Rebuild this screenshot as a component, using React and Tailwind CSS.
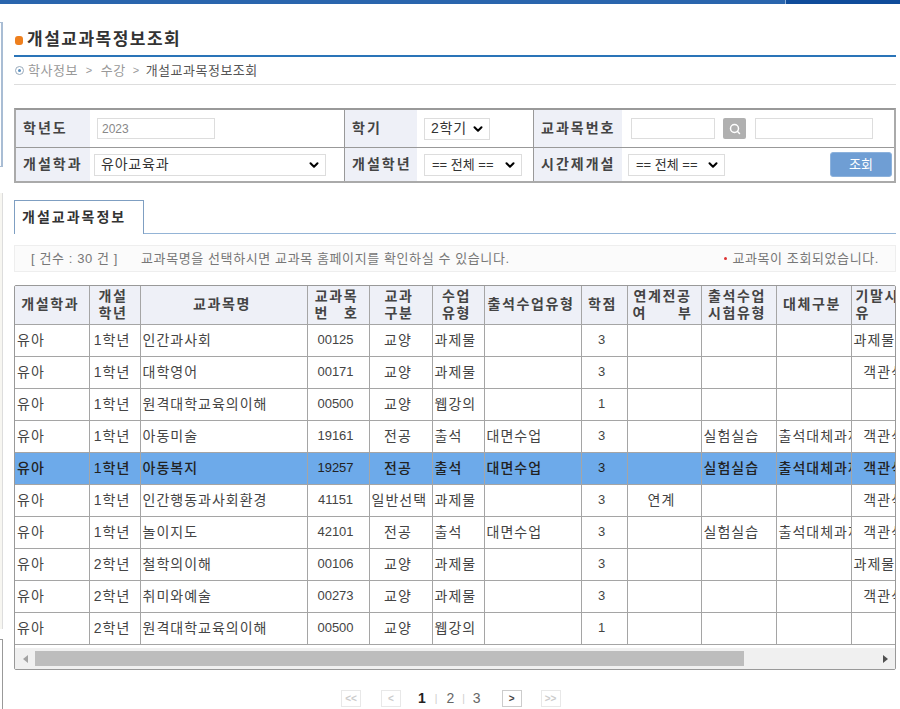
import React from "react";
import { ChevronDown, Search } from "lucide-react";

const cols = [74, 51, 167, 62, 63, 52, 97, 46, 74, 75, 75, 60];

const rows = [
  ["유아", "1학년", "인간과사회", "00125", "교양", "과제물", "", "3", "", "", "", "과제물"],
  ["유아", "1학년", "대학영어", "00171", "교양", "과제물", "", "3", "", "", "", "  객관식"],
  ["유아", "1학년", "원격대학교육의이해", "00500", "교양", "웹강의", "", "1", "", "", "", ""],
  ["유아", "1학년", "아동미술", "19161", "전공", "출석", "대면수업", "3", "", "실험실습", "출석대체과제", "  객관식"],
  ["유아", "1학년", "아동복지", "19257", "전공", "출석", "대면수업", "3", "", "실험실습", "출석대체과제", "  객관식"],
  ["유아", "1학년", "인간행동과사회환경", "41151", "일반선택", "과제물", "", "3", "연계", "", "", "  객관식"],
  ["유아", "1학년", "놀이지도", "42101", "전공", "출석", "대면수업", "3", "", "실험실습", "출석대체과제", "  객관식"],
  ["유아", "2학년", "철학의이해", "00106", "교양", "과제물", "", "3", "", "", "", "과제물"],
  ["유아", "2학년", "취미와예술", "00273", "교양", "과제물", "", "3", "", "", "", "  객관식"],
  ["유아", "2학년", "원격대학교육의이해", "00500", "교양", "웹강의", "", "1", "", "", "", ""],
];

const headers = [
  ["개설학과"],
  ["개설", "학년"],
  ["교과목명"],
  ["교과목", "번 호"],
  ["교과", "구분"],
  ["수업", "유형"],
  ["출석수업유형"],
  ["학점"],
  ["연계전공", "여 부"],
  ["출석수업", "시험유형"],
  ["대체구분"],
  ["기말시험", "유"],
];

const centered = [1, 3, 4, 7, 8];
const digits = [3, 7];

function Label({ children, w }) {
  return (
    <div className={`${w} shrink-0 bg-[#eef0f7] flex items-center pl-[7px] font-bold text-[14px] text-[#444] tracking-[2px] whitespace-nowrap`}>
      {children}
    </div>
  );
}

function Select({ children, w, small }) {
  return (
    <div className={`${w} h-[22px] bg-white border border-[#ddd] flex items-center pr-[4px] text-[#333] whitespace-nowrap ${small ? "pl-[7px] text-[13px]" : "pl-[6px] text-[14px] tracking-[0.8px]"}`}>
      <span>{children}</span>
      <ChevronDown size={14} strokeWidth={3.5} className="ml-auto text-black shrink-0" />
    </div>
  );
}

function PageBtn({ children, dim }) {
  return (
    <div className={`w-[20px] h-[17px] border flex items-center justify-center text-[10px] font-bold ${dim ? "border-[#e8e8e8] text-[#ccc]" : "border-[#ccc] text-[#444]"}`}>
      {children}
    </div>
  );
}

export default function App() {
  return (
    <div className="relative w-[900px] h-[709px] overflow-hidden bg-white font-['Liberation_Sans','Noto_Sans_CJK_KR',sans-serif]">
      {/* top bar */}
      <div className="flex h-[4px]">
        <div className="w-[785px] bg-[#2a65ad]" />
        <div className="flex-1 bg-[#0f4c9a] border-l border-[#8fb0d8]" />
      </div>

      {/* left frame remains */}
      <div className="absolute left-0 top-[22px] w-[3px] h-[145px] bg-white border-r-2 border-y border-[#a9bdd4]" />
      <div className="absolute left-0 top-[193px] w-[3px] h-[436px] bg-[#f7f6f1] border-r border-[#ddd]" />
      <div className="absolute left-0 top-[639px] w-[3px] h-[70px] bg-white border-r border-t border-[#999]" />

      <div className="w-[882px] ml-[14px]">
        {/* title */}
        <div className="h-[53px] border-b-2 border-[#2a74b8] flex items-end pb-[3px]">
          <div className="w-[8px] h-[9px] rounded-[3px] bg-[#ee7f1d] ml-[1px] mr-[4px] mb-[7px]" />
          <h1 className="text-[17px] font-bold text-[#333] tracking-[1.5px]">개설교과목정보조회</h1>
        </div>

        {/* breadcrumb */}
        <div className="h-[28px] border-b border-[#ddd] flex items-center text-[13px] tracking-[0.5px] text-[#999]">
          <span className="w-[9px] h-[9px] rounded-full border border-[#9ab] flex items-center justify-center ml-[1px] mr-[4px]">
            <span className="w-[3px] h-[3px] bg-[#5a8fc0] rounded-full" />
          </span>
          <span>학사정보</span>
          <span className="mx-[8px] text-[11px]">&gt;</span>
          <span>수강</span>
          <span className="ml-[7px] mr-[6px] text-[11px]">&gt;</span>
          <span className="text-[#555]">개설교과목정보조회</span>
        </div>

        {/* search form */}
        <div className="mt-[23px] h-[75px] border-2 border-[#aaa] border-t-[#999] flex flex-col text-[13px]">
          <div className="h-[38px] shrink-0 flex border-b border-[#999]">
            <Label w="w-[74px]">학년도</Label>
            <div className="w-[254px] flex items-center pl-[7px]">
              <div className="w-[118px] h-[21px] border border-[#ddd] flex items-center pl-[4px] text-[12px] text-[#888]">2023</div>
            </div>
            <div className="border-l border-[#999] flex w-[189px]">
              <Label w="w-[72px]">학기</Label>
              <div className="w-[116px] flex items-center pl-[7px]">
                <Select w="w-[66px]">2학기</Select>
              </div>
            </div>
            <div className="border-l border-[#999] flex flex-1">
              <Label w="w-[88px]">교과목번호</Label>
              <div className="flex items-center pl-[9px] flex-1">
                <div className="w-[84px] h-[21px] border border-[#ddd]" />
                <div className="w-[23px] h-[21px] ml-[8px] rounded-[2px] bg-[#b0b0b0] flex items-center justify-center">
                  <Search size={12} strokeWidth={3} className="text-white" />
                </div>
                <div className="w-[118px] h-[21px] ml-[9px] border border-[#ddd]" />
              </div>
            </div>
          </div>
          <div className="flex-1 flex">
            <Label w="w-[74px]">개설학과</Label>
            <div className="w-[254px] flex items-center pl-[4px]">
              <Select w="w-[232px]">유아교육과</Select>
            </div>
            <div className="border-l border-[#999] flex w-[189px]">
              <Label w="w-[72px]">개설학년</Label>
              <div className="w-[116px] flex items-center pl-[7px]">
                <Select w="w-[98px]" small>== 전체 ==</Select>
              </div>
            </div>
            <div className="border-l border-[#999] flex flex-1 items-stretch">
              <Label w="w-[88px]">시간제개설</Label>
              <div className="flex items-center pl-[6px] flex-1">
                <Select w="w-[97px]" small>== 전체 ==</Select>
                <div className="ml-auto mr-[2px] w-[62px] h-[25px] rounded-[3px] bg-[#6f9ed4] border border-[#8db2dc] flex items-center justify-center text-[13px] text-white">조회</div>
              </div>
            </div>
          </div>
        </div>

        {/* tab */}
        <div className="mt-[17px] h-[34px] border-b border-[#94b4d6] flex">
          <div className="w-[130px] h-[34px] bg-white border border-b-0 border-[#7f9fc2] flex items-center pl-[7px] text-[14px] font-bold text-[#333] tracking-[2px] whitespace-nowrap">개설교과목정보</div>
        </div>

        {/* notice */}
        <div className="mt-[11px] h-[27px] bg-[#fbfbfb] border border-[#eee] flex items-center pl-[16px] pr-[16px] text-[13px] tracking-[0.6px] text-[#777] whitespace-nowrap">
          <span>[ 건수 : 30 건 ]</span>
          <span className="ml-[23px]">교과목명을 선택하시면 교과목 홈페이지를 확인하실 수 있습니다.</span>
          <span className="ml-auto flex items-center">
            <span className="w-[3px] h-[3px] rounded-full bg-[#d33] mr-[5px]" />
            교과목이 조회되었습니다.
          </span>
        </div>

        {/* table */}
        <div className="mt-[13px] h-[385px] w-[882px] border border-[#999] rounded-[2px] overflow-hidden flex flex-col">
          <div className="flex-1 overflow-hidden">
            <table className="table-fixed border-collapse w-[1100px] text-[14px] tracking-[1px] text-[#444]">
              <colgroup>
                {cols.map((w, i) => <col key={i} style={{ width: w }} />)}
                <col />
              </colgroup>
              <thead>
                <tr className="h-[38px] bg-[#eef0f7]">
                  {headers.map((h, i) => (
                    <th key={i} className={`border border-t-0 border-[#a5a5a5] first:border-l-0 font-bold text-[14px] leading-[17px] text-[#444] tracking-[1.6px] whitespace-nowrap overflow-hidden ${i === 11 ? "text-left pl-[4px]" : "text-center pr-[3px]"}`}>
                      {h.map((l, j) =>
                        l.includes(" ") ? (
                          <div key={j} className={`flex justify-between mx-auto ${i === 3 ? "w-[44px]" : "w-[60px]"}`}>
                            {l.split(" ").map((p) => <span key={p}>{p}</span>)}
                          </div>
                        ) : (
                          <div key={j}>{l}</div>
                        )
                      )}
                    </th>
                  ))}
                </tr>
              </thead>
              <tbody>
                {rows.map((r, i) => (
                  <tr key={i} className={`h-[32px] ${i === 4 ? "bg-[#6daaea] font-medium text-[#222]" : ""}`}>
                    {r.map((c, j) => (
                      <td key={j} className={`border border-[#a5a5a5] first:border-l-0 pl-[2px] overflow-hidden whitespace-pre ${centered.includes(j) ? "text-center pr-[7px]" : "text-left pr-0"} ${digits.includes(j) ? "text-[13px] tracking-normal" : ""}`}>
                        {c}
                      </td>
                    ))}
                  </tr>
                ))}
              </tbody>
            </table>
          </div>
          <div className="h-[21px] shrink-0 bg-[#f0f0f0] flex items-center">
            <div className="w-[20px] flex justify-center">
              <div className="w-0 h-0 border-y-[4px] border-y-transparent border-r-[5px] border-r-[#a3a3a3]" />
            </div>
            <div className="w-[709px] h-[15px] bg-[#bdbdbd]" />
            <div className="ml-auto w-[20px] flex justify-center">
              <div className="w-0 h-0 border-y-[4px] border-y-transparent border-l-[5px] border-l-[#505050]" />
            </div>
          </div>
        </div>

        {/* pagination */}
        <div className="mt-[18px] flex items-center text-[14px] text-[#666] ml-[327px]">
          <PageBtn dim>&lt;&lt;</PageBtn>
          <div className="ml-[20px]"><PageBtn dim>&lt;</PageBtn></div>
          <span className="ml-[17px] font-bold text-[#222]">1</span>
          <span className="mx-[9px] text-[#ccc] text-[10px]">|</span>
          <span>2</span>
          <span className="mx-[8px] text-[#ccc] text-[10px]">|</span>
          <span>3</span>
          <div className="ml-[21px]"><PageBtn>&gt;</PageBtn></div>
          <div className="ml-[19px]"><PageBtn dim>&gt;&gt;</PageBtn></div>
        </div>
      </div>
    </div>
  );
}
